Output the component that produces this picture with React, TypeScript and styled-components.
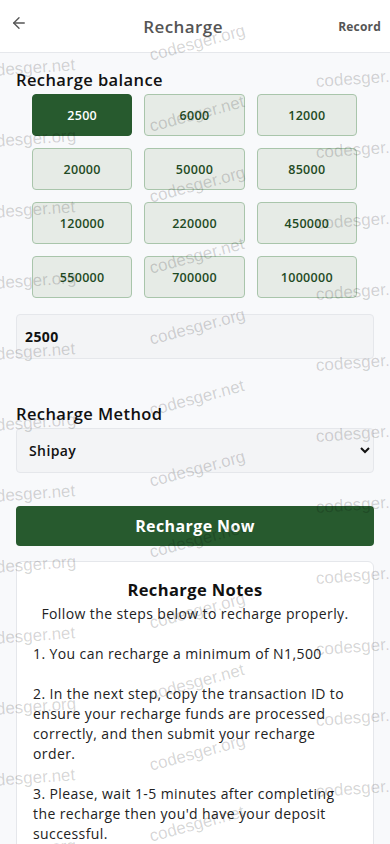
import React, { useState } from 'react'
import styled, { createGlobalStyle } from 'styled-components'
import { ArrowLeft } from 'lucide-react'

const GlobalStyle = createGlobalStyle`
  html, body {
    margin: 0;
    padding: 0;
    background: #f8f9fb;
  }
  body {
    font-family: "Open Sans", "DejaVu Sans", sans-serif;
    letter-spacing: 0.4px;
    color: #111;
  }
  * { box-sizing: border-box; }
`

const AMOUNTS = [2500, 6000, 12000, 20000, 50000, 85000, 120000, 220000, 450000, 550000, 700000, 1000000]

const Page = styled.div`
  position: relative;
  min-height: 844px;
  overflow: hidden;
  background: #f8f9fb;
`

const Header = styled.header`
  height: 53px;
  background: #fff;
  border-bottom: 1px solid #e6e8ec;
  display: flex;
  align-items: center;
  justify-content: space-between;
  padding: 0 9px 0 10px;
`

const BackButton = styled.button`
  border: none;
  background: none;
  padding: 0;
  display: flex;
  align-items: center;
  color: #555;
  cursor: pointer;
  margin-top: -6px;
`

const Title = styled.h1`
  margin: 0;
  font-size: 17px;
  font-weight: 600;
  color: #555;
`

const RecordLink = styled.a`
  font-size: 12px;
  font-weight: 700;
  letter-spacing: 0.2px;
  color: #555;
  text-decoration: none;
`

const Content = styled.main`
  padding: 16px 16px 0;
  display: flex;
  flex-direction: column;
`

const SectionLabel = styled.h2<{ mt?: string }>`
  margin: ${({ mt }) => mt ?? '0'} 0 3px;
  font-size: 16.5px;
  line-height: 22px;
  font-weight: 600;
  color: #111;
`

const AmountGrid = styled.div`
  display: grid;
  grid-template-columns: repeat(3, 1fr);
  gap: 12px;
  margin: 0 17px 0 16px;
`

const AmountButton = styled.button<{ active: boolean }>`
  height: 42px;
  border-radius: 4px;
  border: 1px solid ${({ active }) => (active ? '#275a2e' : '#a9c5ab')};
  background: ${({ active }) => (active ? '#275a2e' : '#e6ebe6')};
  color: ${({ active }) => (active ? '#fff' : '#1f4a24')};
  font-family: inherit;
  font-size: 12.5px;
  letter-spacing: 0.3px;
  font-weight: 600;
  cursor: pointer;
`

const AmountInput = styled.input`
  margin-top: 16px;
  height: 45px;
  width: 100%;
  border: 1px solid #e5e7eb;
  border-radius: 4px;
  background: #f3f4f6;
  padding: 0 8px;
  font-family: inherit;
  letter-spacing: 0.4px;
  font-size: 14px;
  font-weight: 700;
  color: #111;
  outline: none;
`

const MethodSelect = styled.select`
  height: 45px;
  width: 100%;
  border: 1px solid #e5e7eb;
  border-radius: 4px;
  background-color: #f3f4f6;
  padding: 0 8px;
  font-family: inherit;
  letter-spacing: 0.4px;
  font-size: 14px;
  font-weight: 600;
  color: #111;
  outline: none;
`

const SubmitButton = styled.button`
  margin-top: 33px;
  height: 40px;
  width: 100%;
  border: none;
  border-radius: 4px;
  background: #275a2e;
  color: #fff;
  font-family: inherit;
  letter-spacing: 0.4px;
  font-size: 16px;
  font-weight: 700;
  cursor: pointer;
`

const NotesCard = styled.section`
  margin-top: 15px;
  background: #fff;
  border: 1px solid #e5e7eb;
  border-radius: 6px;
  padding: 16px 16px 20px;
  font-size: 14px;
  line-height: 20px;
  color: #222;
`

const NotesTitle = styled.h3`
  margin: 0 0 2px;
  text-align: center;
  font-size: 16.5px;
  line-height: 24px;
  font-weight: 700;
  color: #111;
`

const NotesLead = styled.p`
  margin: 0;
  text-align: center;
`

const NoteItem = styled.p`
  margin: 20px 0 0;
`

const Watermarks = styled.div`
  position: absolute;
  inset: 0;
  pointer-events: none;
  z-index: 5;
`

const Mark = styled.span<{ tilt: number }>`
  position: absolute;
  font-family: "Liberation Sans", Arial, sans-serif;
  font-size: 17px;
  letter-spacing: 0;
  color: rgba(0, 0, 0, 0.17);
  white-space: nowrap;
  transform: rotate(${({ tilt }) => tilt}deg);
  transform-origin: left center;
`

const marks: { x: number; y: number; t: string; tilt: number }[] = []
for (let i = 0; i < 12; i++) {
  marks.push({ x: -22, y: 62 + i * 71, t: i % 2 ? 'codesger.org' : 'codesger.net', tilt: -4 })
  marks.push({ x: 150, y: 46 + i * 71, t: i % 2 ? 'codesger.net' : 'codesger.org', tilt: -15 })
  marks.push({ x: 316, y: 72 + i * 71, t: i % 2 ? 'codesger.net' : 'codesger.org', tilt: -4 })
}

export default function App() {
  const [amount, setAmount] = useState<string>('2500')
  const [method, setMethod] = useState<string>('shipay')

  return (
    <Page>
      <GlobalStyle />
      <Header>
        <BackButton aria-label="Back">
          <ArrowLeft size={18} strokeWidth={1.8} />
        </BackButton>
        <Title>Recharge</Title>
        <RecordLink href="#">Record</RecordLink>
      </Header>
      <Content>
        <SectionLabel>Recharge balance</SectionLabel>
        <AmountGrid>
          {AMOUNTS.map((a) => (
            <AmountButton key={a} active={amount === String(a)} onClick={() => setAmount(String(a))}>
              {a}
            </AmountButton>
          ))}
        </AmountGrid>
        <AmountInput value={amount} onChange={(e) => setAmount(e.target.value)} />

        <SectionLabel mt="44px">Recharge Method</SectionLabel>
        <MethodSelect value={method} onChange={(e) => setMethod(e.target.value)}>
          <option value="shipay">Shipay</option>
        </MethodSelect>

        <SubmitButton>Recharge Now</SubmitButton>

        <NotesCard>
          <NotesTitle>Recharge Notes</NotesTitle>
          <NotesLead>Follow the steps below to recharge properly.</NotesLead>
          <NoteItem>1. You can recharge a minimum of N1,500</NoteItem>
          <NoteItem>
            2. In the next step, copy the transaction ID to ensure your recharge funds are processed
            correctly, and then submit your recharge order.
          </NoteItem>
          <NoteItem>
            3. Please, wait 1-5 minutes after completing the recharge then you'd have your deposit
            successful.
          </NoteItem>
        </NotesCard>
      </Content>
      <Watermarks>
        {marks.map((m, i) => (
          <Mark key={i} tilt={m.tilt} style={{ left: m.x, top: m.y }}>
            {m.t}
          </Mark>
        ))}
      </Watermarks>
    </Page>
  )
}
